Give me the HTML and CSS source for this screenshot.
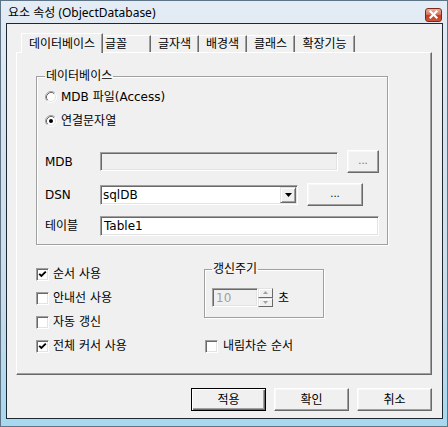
FILE: index.html
```html
<!DOCTYPE html>
<html lang="ko">
<head>
<meta charset="utf-8">
<title>요소 속성</title>
<link rel="stylesheet" href="styles.css">
</head>
<body>
<div class="window">
  <div class="titlebar">
    <span class="title">요소 속성 (ObjectDatabase)</span>
    <span class="close"><svg width="15" height="12" viewBox="0 0 15 12"><path d="M4.5 2.5L10.5 8.5M10.5 2.5L4.5 8.5" stroke="#fff" stroke-width="2.2" stroke-linecap="square"/></svg></span>
  </div>
  <div class="client">
    <div class="tabs">
      <div class="tab active">데이터베이스</div>
      <div class="tab w48 left">글꼴</div>
      <div class="tab w48">글자색</div>
      <div class="tab w48">배경색</div>
      <div class="tab w48">클래스</div>
      <div class="tab w60">확장기능</div>
    </div>
    <div class="panel">
      <fieldset class="group db">
        <legend>데이터베이스</legend>
        <div class="db-body">
          <div class="radio-row">
            <svg class="rb" width="12" height="12" viewBox="0 0 12 12"><circle cx="6" cy="6" r="5" fill="#fff"/><path d="M2.11 9.89A5.5 5.5 0 0 1 9.89 2.11" fill="none" stroke="#a0a0a0"/><path d="M9.89 2.11A5.5 5.5 0 0 1 2.11 9.89" fill="none" stroke="#fff"/><path d="M2.82 9.18A4.5 4.5 0 0 1 9.18 2.82" fill="none" stroke="#696969"/><path d="M9.18 2.82A4.5 4.5 0 0 1 2.82 9.18" fill="none" stroke="#e3e3e3"/></svg>
            <span>MDB 파일(Access)</span>
          </div>
          <div class="radio-row second">
            <svg class="rb" width="12" height="12" viewBox="0 0 12 12"><circle cx="6" cy="6" r="5" fill="#fff"/><path d="M2.11 9.89A5.5 5.5 0 0 1 9.89 2.11" fill="none" stroke="#a0a0a0"/><path d="M9.89 2.11A5.5 5.5 0 0 1 2.11 9.89" fill="none" stroke="#fff"/><path d="M2.82 9.18A4.5 4.5 0 0 1 9.18 2.82" fill="none" stroke="#696969"/><path d="M9.18 2.82A4.5 4.5 0 0 1 2.82 9.18" fill="none" stroke="#e3e3e3"/><circle cx="6" cy="6" r="2" fill="#000"/></svg>
            <span>연결문자열</span>
          </div>
          <div class="field-row mdb">
            <span class="lbl">MDB</span>
            <div class="tb disabled w240"></div>
            <div class="btn dots small dim">...</div>
          </div>
          <div class="field-row dsn">
            <span class="lbl">DSN</span>
            <div class="combo">
              <span class="val">sqlDB</span>
              <span class="dd"><svg width="7" height="4" viewBox="0 0 7 4"><path d="M0 0H7L3.5 4Z" fill="#000"/></svg></span>
            </div>
            <div class="btn dots wide">...</div>
          </div>
          <div class="field-row tbl">
            <span class="lbl">테이블</span>
            <div class="tb w279"><span class="val">Table1</span></div>
          </div>
        </div>
      </fieldset>
      <div class="options">
        <div class="checks">
          <div class="check"><span class="cb"><svg width="9" height="9" viewBox="0 0 9 9"><path d="M1.2 3.8L3.4 6L7.8 1.6" fill="none" stroke="#000" stroke-width="1.9"/></svg></span><span>순서 사용</span></div>
          <div class="check"><span class="cb"></span><span>안내선 사용</span></div>
          <div class="check"><span class="cb"></span><span>자동 갱신</span></div>
          <div class="check"><span class="cb"><svg width="9" height="9" viewBox="0 0 9 9"><path d="M1.2 3.8L3.4 6L7.8 1.6" fill="none" stroke="#000" stroke-width="1.9"/></svg></span><span>전체 커서 사용</span></div>
        </div>
        <div class="right-col">
          <fieldset class="group refresh">
            <legend>갱신주기</legend>
            <div class="refresh-body">
              <div class="tb disabled spin-tb"><span class="val gray">10</span></div>
              <div class="spin">
                <span class="sb"><svg width="5" height="3" viewBox="0 0 5 3"><path d="M0 3H5L2.5 0Z" fill="#a0a0a0"/></svg></span>
                <span class="sb"><svg width="5" height="3" viewBox="0 0 5 3"><path d="M0 0H5L2.5 3Z" fill="#a0a0a0"/></svg></span>
              </div>
              <span class="unit">초</span>
            </div>
          </fieldset>
          <div class="check desc"><span class="cb"></span><span>내림차순 순서</span></div>
        </div>
      </div>
    </div>
    <div class="actions">
      <div class="btn action default">적용</div>
      <div class="btn action">확인</div>
      <div class="btn action">취소</div>
    </div>
  </div>
</div>
</body>
</html>
```

FILE: styles.css
```css
* { box-sizing: border-box; }
html, body { margin: 0; padding: 0; }
body {
  width: 448px;
  height: 427px;
  overflow: hidden;
  background: #fff;
  font-family: "DejaVu Sans", "Noto Sans CJK KR", sans-serif;
  font-size: 12px;
  line-height: 14px;
  color: #000;
}
.window {
  width: 448px;
  height: 427px;
  border: 1px solid #5f7387;
  padding: 0 4px 7px 5px;
  background: linear-gradient(to bottom, #e4ecf5 0, #d6e2ee 30%, #c9dceb 70%, #a7d8ef 100%);
  display: flex;
  flex-direction: column;
}
.titlebar {
  height: 22px;
  flex: none;
  margin: 0 -4px 0 -5px;
  padding: 0 5px 0 7px;
  display: flex;
  align-items: flex-start;
  justify-content: space-between;
}
.title {
  margin-top: 5px;
  color: #000;
  font-family: "Noto Sans", "Noto Sans CJK KR", sans-serif;
}
.close {
  margin-top: 7px;
  width: 17px;
  height: 14px;
  border: 1px solid #7b2a1a;
  border-radius: 3px;
  background: linear-gradient(to bottom, #eab3a2 0, #d7745c 45%, #c23c20 55%, #d0553a 100%);
  display: flex;
  align-items: center;
  justify-content: center;
}
.client {
  flex: 1;
  border: 1px solid #1d2833;
  background: #f0f0f0;
  padding: 9px 10px 0 9px;
  display: flex;
  flex-direction: column;
}

/* tabs */
.tabs {
  height: 19px;
  flex: none;
  display: flex;
  align-items: flex-end;
  padding-left: 5px;
}
.tab {
  height: 17px;
  display: flex;
  align-items: center;
  justify-content: center;
  border-top: 1px solid #fff;
  border-right: 1px solid #696969;
  box-shadow: inset -1px 0 0 #a0a0a0;
  background: #f0f0f0;
  white-space: nowrap;
}
.tab.active {
  width: 82px;
  height: 20px;
  margin-bottom: -1px;
  position: relative;
  z-index: 1;
  border-left: 1px solid #fff;
}
.tab.w48 { width: 48px; }
.tab.w60 { width: 60px; }
.tab.left { justify-content: flex-start; padding-left: 2px; }

.panel {
  height: 323px;
  flex: none;
  border: 1px solid;
  border-color: #fff #696969 #696969 #fff;
  box-shadow: inset -1px -1px 0 #a0a0a0;
  padding: 16px 0 0 19px;
}

/* group boxes */
.group {
  margin: 0;
  padding: 0;
  border: 1px solid #a0a0a0;
  box-shadow: 1px 1px 0 #fff, inset 1px 1px 0 #fff;
  min-width: 0;
}
.group legend {
  padding: 0 1px;
  margin-left: 8px;
  line-height: 14px;
}
.db { width: 352px; }
.db-body { padding: 4px 8px 8px 8px; }

.radio-row {
  height: 20px;
  display: flex;
  align-items: center;
  gap: 4px;
}
.radio-row.second { margin-top: 4px; }
.rb { flex: none; }

.field-row {
  display: flex;
  align-items: center;
}
.field-row.mdb { height: 23px; margin-top: 19px; gap: 9px; }
.field-row.dsn { height: 23px; margin-top: 10px; gap: 9px; }
.field-row.tbl { height: 20px; margin-top: 10px; }
.lbl { width: 55px; flex: none; margin-right: -9px; }
.field-row.tbl .lbl { margin-right: 0; }

.tb {
  height: 19px;
  background: #fff;
  border: 1px solid;
  border-color: #a0a0a0 #fff #fff #a0a0a0;
  box-shadow: inset 1px 1px 0 #696969, inset -1px -1px 0 #e3e3e3;
  display: flex;
  align-items: center;
  padding-left: 2px;
}
.tb.disabled { background: #f0f0f0; }
.w240 { width: 240px; }
.w279 { width: 279px; height: 20px; }
.val { padding-left: 1px; white-space: nowrap; }
.val.gray { color: #a0a0a0; }

.combo {
  width: 198px;
  height: 20px;
  background: #fff;
  border: 1px solid;
  border-color: #a0a0a0 #fff #fff #a0a0a0;
  box-shadow: inset 1px 1px 0 #696969, inset -1px -1px 0 #e3e3e3;
  padding: 1px;
  display: flex;
  align-items: center;
}
.combo .val { flex: 1; padding-left: 1px; }
.dd {
  width: 16px;
  height: 16px;
  background: #f0f0f0;
  border: 1px solid;
  border-color: #e3e3e3 #696969 #696969 #e3e3e3;
  box-shadow: inset 1px 1px 0 #fff, inset -1px -1px 0 #a0a0a0;
  display: flex;
  align-items: center;
  justify-content: center;
}

/* buttons */
.btn {
  height: 23px;
  background: #f0f0f0;
  border: 1px solid;
  border-color: #fff #696969 #696969 #fff;
  box-shadow: inset -1px -1px 0 #a0a0a0, inset 1px 1px 0 #f8f8f8;
  display: flex;
  align-items: center;
  justify-content: center;
  flex: none;
}
.btn.small { width: 32px; }
.btn.wide { width: 56px; }
.btn.dots { padding-bottom: 2px; font-size: 10px; }
.btn.dim { color: #6d6d6d; }

/* options */
.options {
  margin-top: 17px;
  display: flex;
}
.checks { width: 168px; flex: none; }
.check {
  height: 24px;
  display: flex;
  align-items: center;
  gap: 4px;
}
.cb {
  width: 13px;
  height: 13px;
  flex: none;
  background: #fff;
  border: 1px solid;
  border-color: #a0a0a0 #fff #fff #a0a0a0;
  box-shadow: inset 1px 1px 0 #696969, inset -1px -1px 0 #e3e3e3;
  display: flex;
  align-items: center;
  justify-content: center;
}
.right-col { display: flex; flex-direction: column; }
.refresh { width: 120px; }
.refresh legend { margin-left: 7px; }
.refresh-body {
  padding: 12px 7px 10px 7px;
  display: flex;
  align-items: center;
}
.spin-tb { width: 46px; }
.spin {
  width: 15px;
  height: 19px;
  display: flex;
  flex-direction: column;
}
.sb {
  flex: 1;
  background: #f0f0f0;
  border: 1px solid;
  border-color: #e3e3e3 #696969 #696969 #e3e3e3;
  box-shadow: inset 1px 1px 0 #fff;
  display: flex;
  align-items: center;
  justify-content: center;
}
.unit { margin-left: 5px; }
.check.desc { margin-top: 16px; margin-left: 1px; gap: 5px; }

/* action buttons */
.actions {
  margin-top: 13px;
  display: flex;
  justify-content: flex-end;
  gap: 8px;
}
.btn.action { width: 75px; }
.btn.default {
  border: 1px solid #000;
  box-shadow: inset 1px 1px 0 #fff, inset -1px -1px 0 #696969, inset -2px -2px 0 #a0a0a0;
}
```
